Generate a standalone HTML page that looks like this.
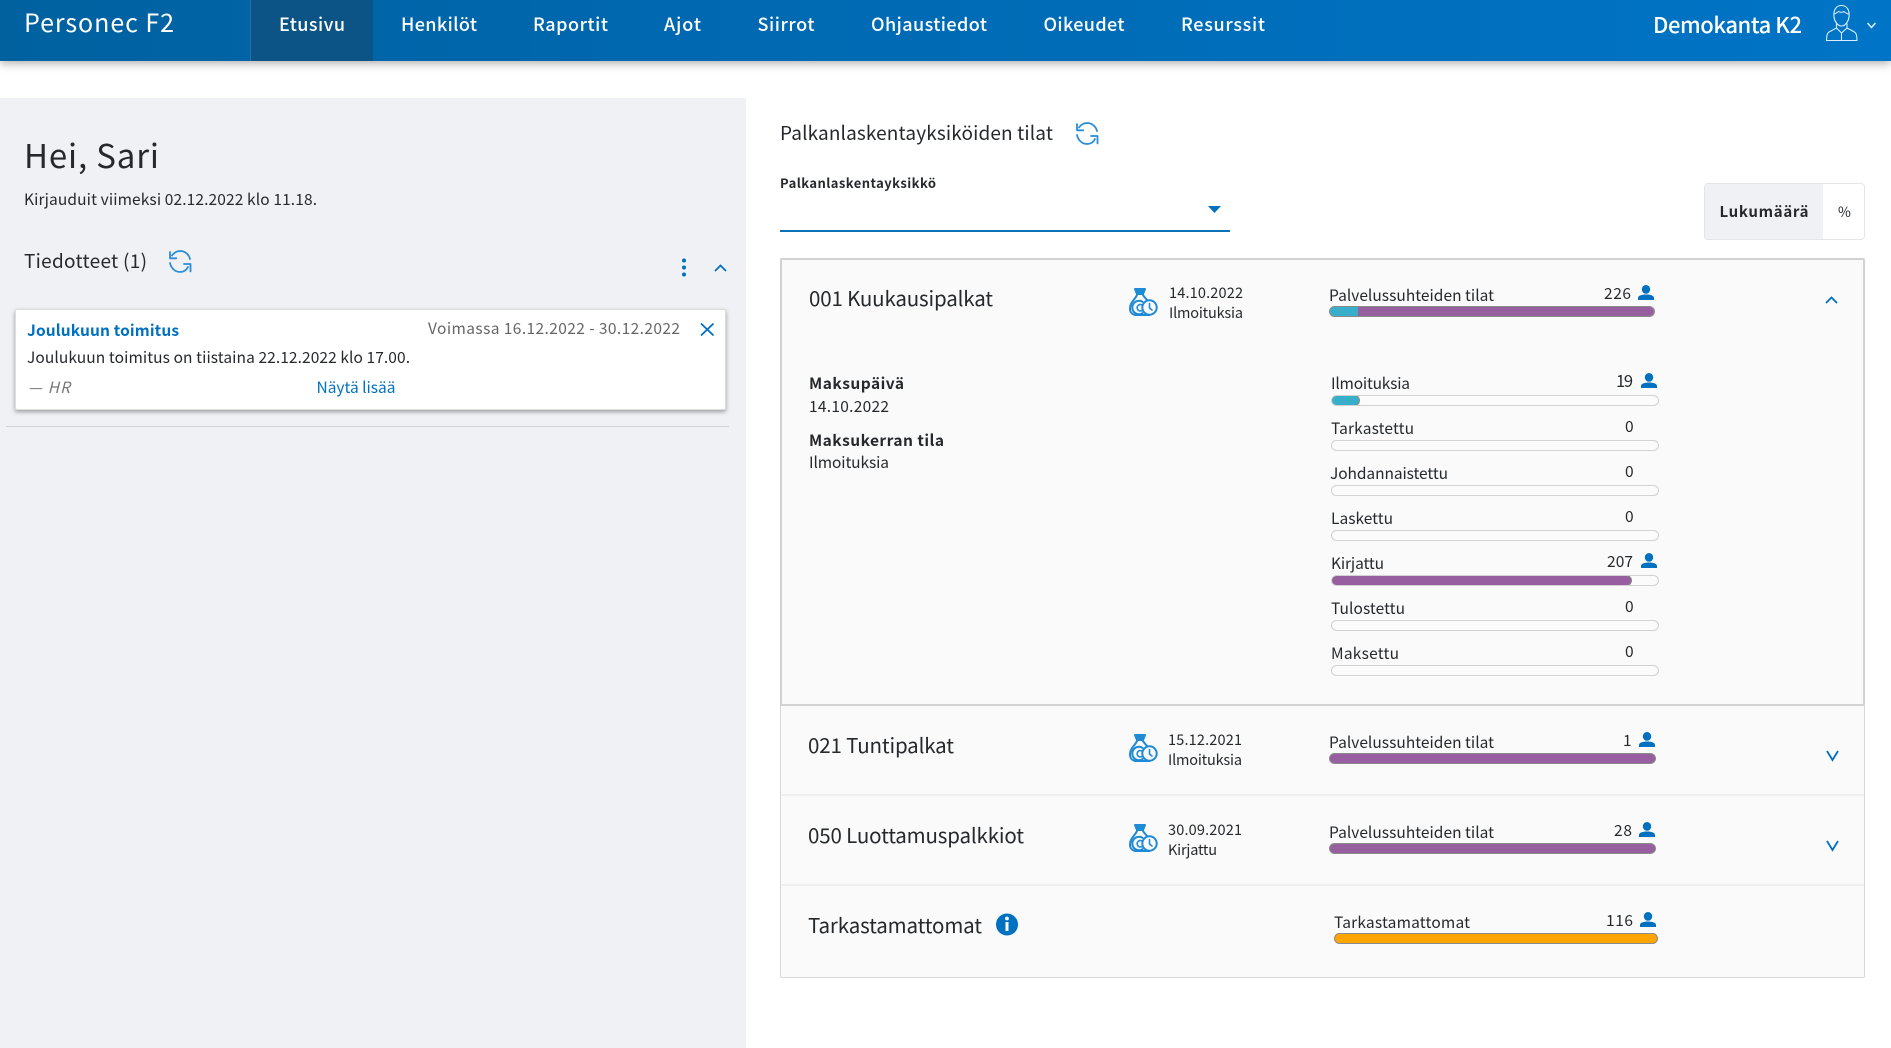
<!DOCTYPE html>
<html lang="fi">
<head>
<meta charset="utf-8">
<title>Personec F2</title>
<style>
html,body{margin:0;padding:0;width:1891px;height:1048px;overflow:hidden;background:#fff}
div{position:absolute;box-sizing:border-box}
.bar{height:11px;border:1px solid #d2d2d2;border-radius:6px;background:#fbfbfb;overflow:hidden}
.fill{left:-1px;top:-1px;height:11px;border-radius:6px;border:1px solid #8a8a8a}
svg{position:absolute;left:0;top:0}
text{font-family:"Noto Sans CJK JP","Liberation Sans",sans-serif;fill:#26292c;font-size:15.5px;white-space:pre}
.w{fill:#fff;font-weight:500;font-size:18px}
.b{font-weight:700}
.l{fill:#0070c0}
.ic{fill:none;stroke:#2a8dd6;stroke-width:1.8;stroke-linecap:round;stroke-linejoin:round}
.ch{fill:none;stroke:#0070c0;stroke-width:1.8}
</style>
</head>
<body>
<div style="left:0;top:0;width:1891px;height:61px;background:linear-gradient(90deg,#00619f,#0068b0 35%,#0074c6);box-shadow:0 2px 9px rgba(0,0,0,.35)"></div>
<div style="left:250px;top:0;width:123px;height:61px;background:#0d5486;border-left:1px solid #2a72a8"></div>
<div style="left:0;top:98px;width:746px;height:950px;background:#f0f1f5"></div>
<div style="left:15px;top:309px;width:711px;height:101px;background:#fff;border:1px solid #dcdcdc;border-radius:2px;box-shadow:0 2px 4px rgba(0,0,0,.35)"></div>
<div style="left:6px;top:426px;width:723px;height:1px;background:#cfd1d4"></div>
<div style="left:780px;top:230px;width:450px;height:2px;background:#0b72ba"></div>
<div style="left:1704px;top:183px;width:161px;height:57px;background:#fff;border:1px solid #e4e5e8;border-radius:4px"></div>
<div style="left:1705px;top:184px;width:118px;height:55px;background:#f0f1f5;border-radius:3px 0 0 3px"></div>
<div style="left:780px;top:258px;width:1085px;height:720px;background:#fafafa;border:1px solid #d8d8d8;border-radius:2px"></div>
<div style="left:780px;top:258px;width:1085px;height:448px;background:#fafafa;border:2px solid #d2d2d2;border-radius:2px"></div>
<div style="left:781px;top:794px;width:1083px;height:2px;background:#f0f0f0"></div>
<div style="left:781px;top:884px;width:1083px;height:2px;background:#f0f0f0"></div>

<div class="bar" style="left:1329px;top:306px;width:326px;border-color:#8a8a8a"><div style="left:0;top:0;width:325px;height:9px;background:#985fa0"></div><div style="left:0;top:0;width:28px;height:9px;background:#38afca"></div></div>

<div class="bar" style="left:1331px;top:395px;width:328px"><div class="fill" style="width:29px;background:#38afca"></div></div>
<div class="bar" style="left:1331px;top:440px;width:328px"></div>
<div class="bar" style="left:1331px;top:485px;width:328px"></div>
<div class="bar" style="left:1331px;top:530px;width:328px"></div>
<div class="bar" style="left:1331px;top:575px;width:328px"><div class="fill" style="width:301px;background:#985fa0"></div></div>
<div class="bar" style="left:1331px;top:620px;width:328px"></div>
<div class="bar" style="left:1331px;top:665px;width:328px"></div>

<div class="bar" style="left:1329px;top:753px;width:327px;background:#985fa0;border-color:#8a8a8a"></div>
<div class="bar" style="left:1329px;top:843px;width:327px;background:#985fa0;border-color:#8a8a8a"></div>
<div class="bar" style="left:1334px;top:933px;width:324px;background:#ffa500;border-color:#8a8a8a"></div>

<svg width="1891" height="1048" viewBox="0 0 1891 1048">
<defs>
<g id="rf" class="ic">
<path d="M3 5.500A10.500 10.500 0 0 1 11 1C16 1 20 4.500 21 9"/><path d="M1 2V8.300H7.300"/>
<path d="M1 13C2 18 6 22 11 22C14.500 22 17.500 20 19 17"/><path d="M21.500 21.500V14H15"/>
</g>
<g id="pp"><ellipse cx="8" cy="4.400" rx="4.200" ry="4.400" fill="#0070c0"/><path d="M0 15V13C0 10.500 4 9.500 8 9.500S16 10.500 16 13V15Z" fill="#0070c0"/></g>
<g id="bag" fill="none" stroke="#1f8ad6" stroke-width="2" stroke-linejoin="round" stroke-linecap="round">
<path d="M6 1H16L14 6H8Z" fill="#1f8ad6"/><path d="M8 7C6.500 11 1 14 1 20.500C1 25 4 27 8 27H20.500"/><path d="M14 7C15 9 17 10.500 18.500 12.500"/>
<circle cx="20.500" cy="19.500" r="7.200"/><path d="M20.500 15.500V20L23 22" stroke-width="1.600"/>
<path d="M13.500 13.800A6.700 6.700 0 1 0 13.500 25.200"/><path d="M13 17A3.200 3.200 0 1 0 13 22.500" stroke-width="1.600"/>
</g>
</defs>

<text x="24" y="32" class="w" style="font-size:25px;font-weight:400" textLength="150" lengthAdjust="spacing">Personec F2</text>
<text x="279" y="31" class="w" textLength="66" lengthAdjust="spacing">Etusivu</text>
<text x="401" y="31" class="w" textLength="76" lengthAdjust="spacing">Henkilöt</text>
<text x="533" y="31" class="w" textLength="75" lengthAdjust="spacing">Raportit</text>
<text x="664" y="31" class="w" textLength="37" lengthAdjust="spacing">Ajot</text>
<text x="757.500" y="31" class="w" textLength="57" lengthAdjust="spacing">Siirrot</text>
<text x="871" y="31" class="w" textLength="116" lengthAdjust="spacing">Ohjaustiedot</text>
<text x="1043.500" y="31" class="w" textLength="81" lengthAdjust="spacing">Oikeudet</text>
<text x="1181" y="31" class="w" textLength="84" lengthAdjust="spacing">Resurssit</text>
<text x="1653" y="33" class="w" style="font-size:22px" textLength="149" lengthAdjust="spacing">Demokanta K2</text>

<g fill="none" stroke="#dbeeff" stroke-width="1.100" stroke-linejoin="round">
<path d="M1834 17C1833 9 1837 5.500 1841.500 5.500S1850 9 1849 17C1848.500 21 1845.500 26 1841.500 26S1834.500 21 1834 17Z"/>
<path d="M1834.500 14C1837 13 1838 11.500 1839 11.500C1840 13 1843 12 1844 11.500C1845 13 1847 13.500 1848.500 14"/>
<path d="M1836.500 23.500V28L1829 32C1827 33 1826.500 36 1826.500 40.500H1857C1857 36 1856.500 33 1854.500 32L1847 28V23.500"/>
<path d="M1836.500 28L1841.500 33L1847 28M1841.500 33V40.500"/>
</g>
<path d="M1867.500 23L1871.500 27.500L1875.500 23" fill="none" stroke="#dbeeff" stroke-width="1.500"/>

<text x="24" y="168" style="font-size:33px" textLength="135" lengthAdjust="spacing">Hei, Sari</text>
<text x="24" y="205" textLength="293" lengthAdjust="spacing">Kirjauduit viimeksi 02.12.2022 klo 11.18.</text>
<text x="24" y="268" style="font-size:19px" textLength="123" lengthAdjust="spacing">Tiedotteet (1)</text>
<use href="#rf" x="169" y="250"/>
<circle cx="684" cy="260.500" r="2" fill="#0070c0"/><circle cx="684" cy="267.500" r="2" fill="#0070c0"/><circle cx="684" cy="274.500" r="2" fill="#0070c0"/>
<path class="ch" d="M715 271L720.500 265.500L726 271"/>

<text x="27" y="336" class="l b" textLength="152" lengthAdjust="spacing">Joulukuun toimitus</text>
<text x="428" y="334" style="fill:#666" textLength="252" lengthAdjust="spacing">Voimassa 16.12.2022 - 30.12.2022</text>
<path d="M701 323.500L713.500 335.500M713.500 323.500L701 335.500" fill="none" stroke="#0070c0" stroke-width="1.800"/>
<text x="27" y="363" textLength="383" lengthAdjust="spacing">Joulukuun toimitus on tiistaina 22.12.2022 klo 17.00.</text>
<text x="28" y="393" style="fill:#777;font-style:italic" textLength="42" lengthAdjust="spacing">— HR</text>
<text x="316.500" y="393" class="l" textLength="79" lengthAdjust="spacing">Näytä lisää</text>

<text x="780" y="140" style="font-size:19px" textLength="273" lengthAdjust="spacing">Palkanlaskentayksiköiden tilat</text>
<use href="#rf" x="1076" y="122"/>
<text x="780" y="188" class="b" style="font-size:13px" textLength="156" lengthAdjust="spacing">Palkanlaskentayksikkö</text>
<path d="M1208 206H1221L1214.500 213Z" fill="#0070c0"/>
<text x="1719.500" y="217" class="b" style="font-size:15px" textLength="89" lengthAdjust="spacing">Lukumäärä</text>
<text x="1838" y="217" style="font-size:14px" textLength="13" lengthAdjust="spacing">%</text>

<text x="809" y="306" style="font-size:20.500px" textLength="184" lengthAdjust="spacing">001 Kuukausipalkat</text>
<use href="#bag" x="1129" y="288"/>
<text x="1169" y="298" style="font-size:14.500px" textLength="74" lengthAdjust="spacing">14.10.2022</text>
<text x="1169" y="318" style="font-size:14.500px" textLength="74" lengthAdjust="spacing">Ilmoituksia</text>
<text x="1329" y="301" textLength="165" lengthAdjust="spacing">Palvelussuhteiden tilat</text>
<text x="1604" y="299" textLength="27" lengthAdjust="spacing">226</text>
<use href="#pp" x="1638" y="285"/>
<path class="ch" d="M1826 303L1831.500 297.500L1837 303"/>

<text x="809" y="389" class="b" textLength="95" lengthAdjust="spacing">Maksupäivä</text>
<text x="809" y="412" textLength="80" lengthAdjust="spacing">14.10.2022</text>
<text x="809" y="446" class="b" textLength="135" lengthAdjust="spacing">Maksukerran tila</text>
<text x="809" y="468" textLength="80" lengthAdjust="spacing">Ilmoituksia</text>

<text x="1331" y="389" textLength="79" lengthAdjust="spacing">Ilmoituksia</text>
<text x="1616" y="387" style="font-size:16.500px" textLength="17" lengthAdjust="spacing">19</text>
<use href="#pp" x="1641" y="373"/>
<text x="1331" y="434" textLength="83" lengthAdjust="spacing">Tarkastettu</text>
<text x="1625" y="432">0</text>
<text x="1330" y="479" textLength="118" lengthAdjust="spacing">Johdannaistettu</text>
<text x="1625" y="477">0</text>
<text x="1331" y="524" textLength="62" lengthAdjust="spacing">Laskettu</text>
<text x="1625" y="522">0</text>
<text x="1331" y="569" textLength="53" lengthAdjust="spacing">Kirjattu</text>
<text x="1607" y="567" textLength="26" lengthAdjust="spacing">207</text>
<use href="#pp" x="1641" y="553"/>
<text x="1331" y="614" textLength="74" lengthAdjust="spacing">Tulostettu</text>
<text x="1625" y="612">0</text>
<text x="1331" y="659" textLength="68" lengthAdjust="spacing">Maksettu</text>
<text x="1625" y="657">0</text>

<text x="808" y="753" style="font-size:20.500px" textLength="146" lengthAdjust="spacing">021 Tuntipalkat</text>
<use href="#bag" x="1129" y="734"/>
<text x="1168" y="745" style="font-size:14.500px" textLength="74" lengthAdjust="spacing">15.12.2021</text>
<text x="1168" y="765" style="font-size:14.500px" textLength="74" lengthAdjust="spacing">Ilmoituksia</text>
<text x="1329" y="748" textLength="165" lengthAdjust="spacing">Palvelussuhteiden tilat</text>
<text x="1623" y="746">1</text>
<use href="#pp" x="1639" y="732"/>
<path class="ch" d="M1827 751L1832.500 760L1838 751"/>

<text x="808" y="843" style="font-size:20.500px" textLength="216" lengthAdjust="spacing">050 Luottamuspalkkiot</text>
<use href="#bag" x="1129" y="824"/>
<text x="1168" y="835" style="font-size:14.500px" textLength="74" lengthAdjust="spacing">30.09.2021</text>
<text x="1168" y="855" style="font-size:14.500px" textLength="49" lengthAdjust="spacing">Kirjattu</text>
<text x="1329" y="838" textLength="165" lengthAdjust="spacing">Palvelussuhteiden tilat</text>
<text x="1614" y="836" textLength="18" lengthAdjust="spacing">28</text>
<use href="#pp" x="1639" y="822"/>
<path class="ch" d="M1827 841L1832.500 850L1838 841"/>

<text x="808" y="933" style="font-size:20.500px" textLength="174" lengthAdjust="spacing">Tarkastamattomat</text>
<circle cx="1007" cy="924.500" r="11" fill="#0070c0"/>
<rect x="1005.500" y="922" width="3" height="9" fill="#fff"/><circle cx="1007" cy="918.500" r="1.900" fill="#fff"/>
<text x="1334" y="928" textLength="136" lengthAdjust="spacing">Tarkastamattomat</text>
<text x="1606" y="926" textLength="27" lengthAdjust="spacing">116</text>
<use href="#pp" x="1640" y="912"/>
</svg>
</body>
</html>
